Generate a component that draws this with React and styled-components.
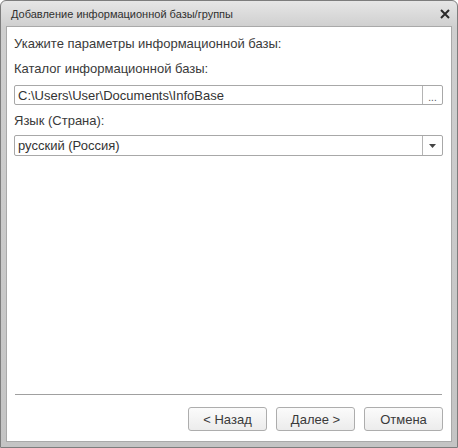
import React from "react";
import styled, { createGlobalStyle } from "styled-components";

const Global = createGlobalStyle`
  html, body {
    margin: 0;
    padding: 0;
    background: #ffffff;
  }
  * { box-sizing: border-box; }
`;

const Window = styled.div`
  width: 458px;
  height: 448px;
  display: flex;
  flex-direction: column;
  border: 1px solid #7d7d7d;
  border-radius: 6px 6px 0 0;
  background: linear-gradient(#e6e6e6, #cfcfcf 26px, #c4c4c4);
  padding: 0 5px 5px 5px;
  font-family: "Liberation Sans", Arial, sans-serif;
  color: #333;
`;

const TitleBar = styled.div`
  height: 25px;
  display: flex;
  align-items: center;
  justify-content: space-between;
  padding: 1px 0 0 5px;
  font-size: 11px;
  color: #303030;
`;

const CloseBtn = styled.button`
  border: none;
  background: transparent;
  padding: 0;
  width: 16px;
  height: 16px;
  display: flex;
  align-items: center;
  justify-content: center;
  margin-right: -1px;
`;

const Content = styled.div`
  flex: 1;
  background: #fff;
  border: 1px solid #a9a9a9;
  display: flex;
  flex-direction: column;
  padding: 9px 8px 10px 7px;
  font-size: 13px;
  color: #3a3a3a;
`;

const Label = styled.div`
  height: 16px;
  line-height: 16px;
  margin-bottom: ${(p) => p.gap || 0}px;
`;

const Field = styled.div`
  display: flex;
  height: ${(p) => p.h}px;
  border: 1px solid #a8a8a8;
  border-radius: 2px;
  margin-bottom: ${(p) => p.gap || 0}px;
`;

const FieldText = styled.div`
  flex: 1;
  display: flex;
  align-items: center;
  padding-left: 3px;
  color: #333;
`;

const SideBtn = styled.div`
  width: 20px;
  border-left: 1px solid #b4b4b4;
  display: flex;
  align-items: center;
  justify-content: center;
  padding-top: ${(p) => p.pt || 0}px;
  font-size: 10px;
  color: #555;
`;

const Spacer = styled.div`
  flex: 1;
`;

const Separator = styled.div`
  height: 1px;
  background: #a0a0a0;
  margin: 0 1px 0 1px;
`;

const Footer = styled.div`
  display: flex;
  justify-content: flex-end;
  gap: 9px;
  padding-top: 12px;
`;

const Button = styled.button`
  width: 79px;
  height: 24px;
  border: 1px solid #adadad;
  border-radius: 3px;
  background: linear-gradient(#fbfbfb, #ececec);
  font-family: "Liberation Sans", Arial, sans-serif;
  font-size: 13px;
  color: #3a3a3a;
  padding: 0;
`;

export default function App() {
  return (
    <>
      <Global />
      <Window>
        <TitleBar>
          <span>Добавление информационной базы/группы</span>
          <CloseBtn aria-label="Закрыть">
            <svg width="10" height="10" viewBox="0 0 10 10">
              <path d="M1 1L9 9M9 1L1 9" stroke="#2a2a2a" strokeWidth="2" />
            </svg>
          </CloseBtn>
        </TitleBar>
        <Content>
          <Label gap={9}>Укажите параметры информационной базы:</Label>
          <Label gap={8}>Каталог информационной базы:</Label>
          <Field h={20} gap={8}>
            <FieldText>C:\Users\User\Documents\InfoBase</FieldText>
            <SideBtn pt={4}>...</SideBtn>
          </Field>
          <Label gap={6}>Язык (Страна):</Label>
          <Field h={21}>
            <FieldText>русский (Россия)</FieldText>
            <SideBtn>
              <svg width="7" height="4" viewBox="0 0 7 4">
                <path d="M0 0H7L3.5 4Z" fill="#444" />
              </svg>
            </SideBtn>
          </Field>
          <Spacer />
          <Separator />
          <Footer>
            <Button>&lt; Назад</Button>
            <Button>Далее &gt;</Button>
            <Button>Отмена</Button>
          </Footer>
        </Content>
      </Window>
    </>
  );
}
